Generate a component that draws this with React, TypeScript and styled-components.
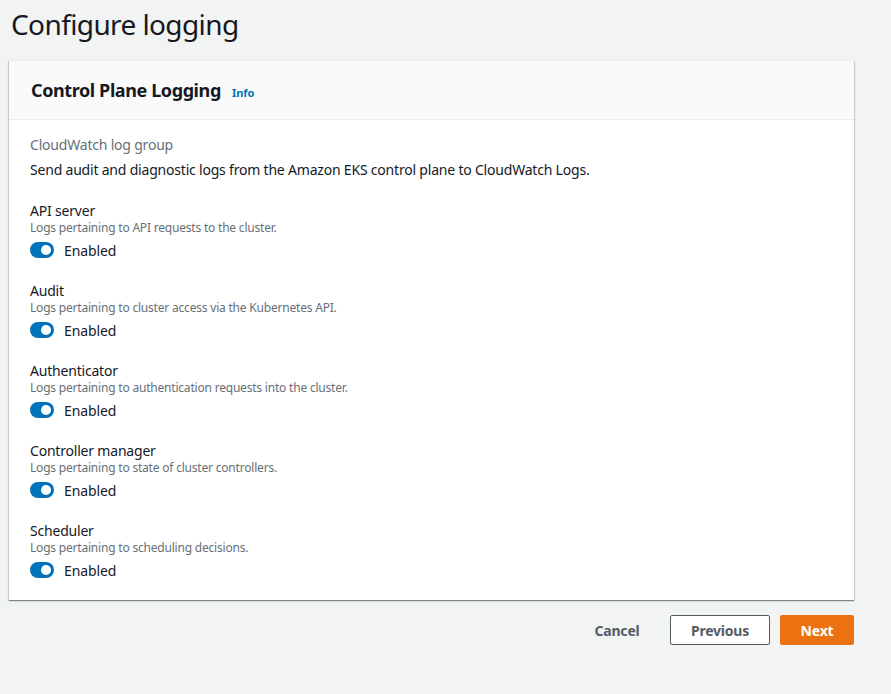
import React from "react";
import styled, { createGlobalStyle } from "styled-components";

const Global = createGlobalStyle`
  html, body { margin: 0; padding: 0; background: #f2f3f3; }
  body { font-family: "Noto Sans", "Open Sans", sans-serif; color: #16191f; }
  * { box-sizing: border-box; }
`;

const Page = styled.div`
  width: 891px;
  min-height: 694px;
  padding: 0 0 0 9px;
`;

const Title = styled.h1`
  margin: 0;
  padding: 5px 0 0 2px;
  height: 60px;
  font-size: 28px;
  font-weight: 400;
  line-height: 38px;
  color: #16191f;
  letter-spacing: -0.6px;
`;

const Card = styled.section`
  width: 845px;
  background: #fff;
  box-shadow: 0 1px 1px 0 rgba(0, 28, 36, 0.3), 1px 1px 1px 0 rgba(0, 28, 36, 0.15),
    -1px 1px 1px 0 rgba(0, 28, 36, 0.15);
  border-top: 1px solid #eaeded;
`;

const CardHeader = styled.header`
  height: 59px;
  background: #fafafa;
  border-bottom: 1px solid #eaeded;
  display: flex;
  align-items: center;
  padding: 0 22px;
  gap: 11px;
`;

const CardTitle = styled.h2`
  margin: 0;
  font-size: 18px;
  font-weight: 700;
  line-height: 22px;
  color: #16191f;
  letter-spacing: -0.4px;
`;

const InfoLink = styled.a`
  font-size: 11px;
  font-weight: 700;
  color: #0073bb;
  text-decoration: none;
  margin-top: 4px;
`;

const CardBody = styled.div`
  padding: 15px 21px 20px;
  display: flex;
  flex-direction: column;
`;

const FieldLabel = styled.div`
  font-size: 14px;
  line-height: 20px;
  color: #687078;
  letter-spacing: -0.2px;
`;

const Lead = styled.p`
  margin: 5px 0 0;
  font-size: 14px;
  line-height: 20px;
  color: #16191f;
  letter-spacing: -0.2px;
`;

const Items = styled.div`
  display: flex;
  flex-direction: column;
  gap: 22px;
  margin-top: 22px;
`;

const Item = styled.div`
  display: flex;
  flex-direction: column;
`;

const ItemLabel = styled.div`
  font-size: 14px;
  line-height: 18px;
  color: #16191f;
  letter-spacing: -0.2px;
`;

const ItemDesc = styled.div`
  font-size: 12px;
  line-height: 16px;
  color: #687078;
  letter-spacing: -0.2px;
`;

const ToggleRow = styled.label`
  margin-top: 4px;
  height: 20px;
  display: flex;
  align-items: center;
  gap: 10px;
  font-size: 14px;
  color: #16191f;
  letter-spacing: -0.1px;
`;

const Track = styled.span<{ $on: boolean }>`
  position: relative;
  width: 24px;
  height: 16px;
  border-radius: 8px;
  background: ${(p) => (p.$on ? "#0073bb" : "#687078")};
  flex: none;
`;

const Knob = styled.span<{ $on: boolean }>`
  position: absolute;
  top: 3px;
  left: ${(p) => (p.$on ? "11px" : "3px")};
  width: 10px;
  height: 10px;
  border-radius: 50%;
  background: #fff;
`;

const Actions = styled.div`
  width: 845px;
  display: flex;
  justify-content: flex-end;
  align-items: center;
  gap: 10px;
  margin-top: 15px;
`;

const Button = styled.button<{ $variant: "link" | "normal" | "primary" }>`
  height: 30px;
  padding: 0;
  font-family: inherit;
  font-size: 14px;
  font-weight: 700;
  letter-spacing: -0.2px;
  border-radius: 2px;
  cursor: pointer;
  border: 1px solid
    ${(p) => (p.$variant === "normal" ? "#545b64" : p.$variant === "primary" ? "#ec7211" : "transparent")};
  background: ${(p) => (p.$variant === "primary" ? "#ec7211" : p.$variant === "normal" ? "#fff" : "transparent")};
  color: ${(p) => (p.$variant === "primary" ? "#fff" : "#545b64")};
  width: ${(p) => (p.$variant === "normal" ? "100px" : p.$variant === "primary" ? "74px" : "86px")};
`;

const logs = [
  { name: "API server", desc: "Logs pertaining to API requests to the cluster." },
  { name: "Audit", desc: "Logs pertaining to cluster access via the Kubernetes API." },
  { name: "Authenticator", desc: "Logs pertaining to authentication requests into the cluster." },
  { name: "Controller manager", desc: "Logs pertaining to state of cluster controllers." },
  { name: "Scheduler", desc: "Logs pertaining to scheduling decisions." },
];

export default function App() {
  return (
    <Page>
      <Global />
      <Title>Configure logging</Title>
      <Card>
        <CardHeader>
          <CardTitle>Control Plane Logging</CardTitle>
          <InfoLink href="#">Info</InfoLink>
        </CardHeader>
        <CardBody>
          <FieldLabel>CloudWatch log group</FieldLabel>
          <Lead>Send audit and diagnostic logs from the Amazon EKS control plane to CloudWatch Logs.</Lead>
          <Items>
            {logs.map((l) => (
              <Item key={l.name}>
                <ItemLabel>{l.name}</ItemLabel>
                <ItemDesc>{l.desc}</ItemDesc>
                <ToggleRow>
                  <Track $on>
                    <Knob $on />
                  </Track>
                  Enabled
                </ToggleRow>
              </Item>
            ))}
          </Items>
        </CardBody>
      </Card>
      <Actions>
        <Button $variant="link">Cancel</Button>
        <Button $variant="normal">Previous</Button>
        <Button $variant="primary">Next</Button>
      </Actions>
    </Page>
  );
}
